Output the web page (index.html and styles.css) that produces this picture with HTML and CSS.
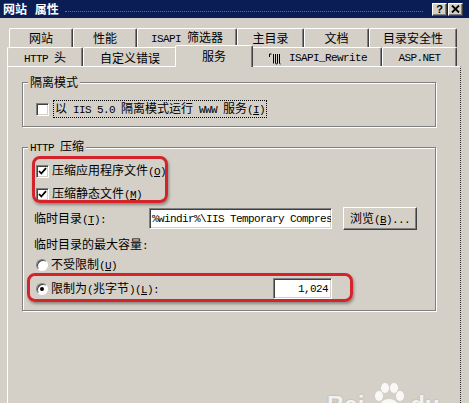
FILE: index.html
```html
<!DOCTYPE html>
<html lang="zh-CN">
<head>
<meta charset="utf-8">
<title>网站 属性</title>
<link rel="stylesheet" href="styles.css">
</head>
<body>
<div class="titlebar">
  <span class="title">网站 属性</span>
  <span class="title-dots"></span>
  <span class="tbtn help">?</span>
  <span class="tbtn close"><svg width="9" height="8" viewBox="0 0 9 8"><path d="M1 0.5 L8 7.5 M8 0.5 L1 7.5" stroke="#000" stroke-width="1.8"/></svg></span>
</div>

<div class="tabs">
  <div class="tabrow row1">
    <div class="tab t-site"><span>网站</span></div>
    <div class="tab t-perf"><span>性能</span></div>
    <div class="tab t-isapi"><span><span class="l">ISAPI </span>筛选器</span></div>
    <div class="tab t-home"><span>主目录</span></div>
    <div class="tab t-doc"><span>文档</span></div>
    <div class="tab t-sec"><span>目录安全性</span></div>
  </div>
  <div class="tabrow row2">
    <div class="tab t-http"><span><span class="l">HTTP </span>头</span></div>
    <div class="tab t-err"><span>自定义错误</span></div>
    <div class="tab t-svc sel"><span>服务</span></div>
    <div class="tab t-rw"><svg class="rw-icon" width="14" height="13" viewBox="0 0 14 13"><path d="M1.5 5 V2 H3.5 M5.5 2 V11.5 M7.5 2 V11 Q7.5 12 8.5 12 Q9.5 12 9.5 11 V2 M11.5 2 V11 Q11.5 12 12.5 12" stroke="#000" stroke-width="1" fill="none"/></svg><span class="l">ISAPI_Rewrite</span></div>
    <div class="tab t-asp"><span class="l">ASP.NET</span></div>
  </div>
</div>

<div class="panel">
  <fieldset class="group g1">
    <legend>隔离模式</legend>
    <div class="gbody g1-body">
      <div class="row">
        <span class="check"></span>
        <span class="label focus">以<span class="l"> IIS 5.0 </span>隔离模式运行<span class="l"> WWW </span>服务<span class="l">(<u>I</u>)</span></span>
      </div>
    </div>
  </fieldset>

  <fieldset class="group g2">
    <legend><span class="l">HTTP </span>压缩</legend>
    <div class="gbody g2-body">
      <div class="row r-cb1">
        <span class="check on"><svg width="9" height="9" viewBox="0 0 9 9"><path d="M1 4 L3.3 6.5 L8 1.2" stroke="#000" stroke-width="1.8" fill="none"/></svg></span>
        <span class="label">压缩应用程序文件<span class="l">(<u>O</u>)</span></span>
      </div>
      <div class="row r-cb2">
        <span class="check on"><svg width="9" height="9" viewBox="0 0 9 9"><path d="M1 4 L3.3 6.5 L8 1.2" stroke="#000" stroke-width="1.8" fill="none"/></svg></span>
        <span class="label">压缩静态文件<span class="l">(<u>M</u>)</span></span>
      </div>
      <div class="row r-dir">
        <span class="dir-label">临时目录<span class="l">(<u>T</u>):</span></span>
        <span class="input dir-input"><span class="l">%windir%\IIS Temporary Compressed Files</span></span>
        <span class="button browse"><span>浏览<span class="l">(<u>B</u>)...</span></span></span>
      </div>
      <div class="row r-cap">
        <span>临时目录的最大容量<span class="l">:</span></span>
      </div>
      <div class="row r-rad1">
        <span class="radio"></span>
        <span class="label">不受限制<span class="l">(<u>U</u>)</span></span>
      </div>
      <div class="row r-rad2">
        <span class="radio on"></span>
        <span class="label lim-label">限制为<span class="l">(</span>兆字节<span class="l">)(<u>L</u>):</span></span>
        <span class="input size-input"><span class="l">1,024</span></span>
      </div>
    </div>
  </fieldset>
</div>

<div class="mark mark1"></div>
<div class="mark mark2"></div>

<div class="wm">
  <span>Bai</span>
  <svg class="paw" width="36" height="30" viewBox="0 0 36 30"><ellipse cx="9" cy="14" rx="4" ry="5"/><ellipse cx="15" cy="6" rx="4" ry="5"/><ellipse cx="24" cy="6" rx="4" ry="5"/><ellipse cx="30" cy="14" rx="4" ry="5"/><ellipse cx="19" cy="24" rx="9" ry="7"/></svg>
  <span>du</span>
</div>
</body>
</html>
```

FILE: styles.css
```css
* { box-sizing: border-box; }
html, body { margin: 0; padding: 0; }
body {
  width: 469px;
  height: 403px;
  overflow: hidden;
  position: relative;
  background: #d4d0c8;
  font-family: "Noto Sans CJK SC", "Liberation Sans", sans-serif;
  font-size: 12px;
  line-height: 14px;
  color: #000;
}
.l { font-family: "Liberation Mono", monospace; font-size: 11px; letter-spacing: -0.6px; }
u { text-decoration: underline; text-underline-offset: 1px; }

/* title bar */
.titlebar {
  height: 18px;
  background: #0b1d55;
  display: flex;
  align-items: center;
  padding: 0 6px 0 3px;
  color: #fff;
}
.title { font-weight: bold; font-size: 12px; line-height: 14px; word-spacing: 5px; }
.title-dots {
  flex: 1;
  margin: 5px 8px 0 6px;
  border-top: 1px dotted rgba(160, 180, 225, 0.55);
  height: 0;
}
.tbtn {
  width: 15px;
  height: 13px;
  margin-left: 1px;
  background: #d4d0c8;
  border: 1px solid;
  border-color: #fff #404040 #404040 #fff;
  box-shadow: inset -1px -1px 0 #808080;
  display: flex;
  align-items: center;
  justify-content: center;
  color: #000;
  font: bold 11px/11px "Liberation Sans", sans-serif;
}

/* tabs */
.tabs { height: 48px; padding-top: 10px; }
.tabrow { display: flex; height: 19px; }
.row1 { margin-left: 9px; }
.row2 { margin-left: 7px; align-items: flex-end; }
.tab {
  flex: none;
  height: 19px;
  background: #d4d0c8;
  border-top: 1px solid #fff;
  border-left: 1px solid #fff;
  border-right: 1px solid #404040;
  box-shadow: inset -1px 0 0 #808080;
  border-radius: 2px 2px 0 0;
  display: flex;
  align-items: center;
  justify-content: center;
  white-space: nowrap;
}
.row2 .tab { padding-top: 2px; }
.t-site { width: 64px; }
.t-perf { width: 64px; }
.t-isapi { width: 100px; }
.t-home { width: 67px; }
.t-doc { width: 65px; }
.t-sec { width: 88px; }
.t-http { width: 76px; }
.t-err { width: 94px; }
.row2 .t-svc {
  width: 78px;
  height: 22px;
  margin: 0 -2px -1px;
  padding: 0 0 2px;
  position: relative;
  z-index: 1;
}
.t-rw { width: 131px; }
.rw-icon { margin-right: 7px; margin-left: 2px; }
.t-asp { width: 75px; }

/* panel */
.panel {
  margin-left: 7px;
  width: 454px;
  height: 337px;
  border-top: 1px solid #fff;
  border-left: 1px solid #fff;
  border-right: 1px dotted #2a2a2a;
  padding: 8px 0 0 14px;
}
.group {
  margin: 0;
  padding: 0;
  min-width: 0;
  width: 414px;
  border: 1px solid #808080;
  box-shadow: 1px 1px 0 #fff, inset 1px 1px 0 #fff;
}
.group legend {
  margin-left: 5px;
  padding: 0 2px;
  line-height: 14px;
  background: #d4d0c8;
}
.g2 { margin-top: 12px; }
.g1-body { padding: 12px 0 9px 13px; }
.g2-body { padding: 0 0 11px 11px; }

.row { display: flex; align-items: center; height: 16px; white-space: nowrap; }
.label { margin-left: 3px; }
.focus { outline: 1px dotted #000; outline-offset: 0; margin-left: 5px; padding: 0 1px; }

.check {
  width: 13px;
  height: 13px;
  flex: none;
  background: #fff;
  border: 1px solid;
  border-color: #808080 #fff #fff #808080;
  box-shadow: inset 1px 1px 0 #404040, inset -1px -1px 0 #d4d0c8;
  display: flex;
  align-items: center;
  justify-content: center;
}
.g2-body .check, .g2-body .radio { margin-left: 2px; }

.radio {
  width: 12px;
  height: 12px;
  flex: none;
  border-radius: 50%;
  background: #fff;
  border: 1px solid;
  border-color: #808080 #fff #fff #808080;
  box-shadow: inset 1px 1px 0 #404040;
  display: flex;
  align-items: center;
  justify-content: center;
}
.radio.on::after {
  content: "";
  width: 4px;
  height: 4px;
  border-radius: 50%;
  background: #000;
}

.r-cb1 { margin-top: 8px; }
.r-cb2 { margin-top: 7px; }
.r-dir { margin-top: 5px; height: 23px; }
.dir-label { width: 115px; flex: none; }
.input {
  height: 21px;
  background: #fff;
  border: 1px solid;
  border-color: #808080 #fff #fff #808080;
  box-shadow: inset 1px 1px 0 #404040, inset -1px -1px 0 #d4d0c8;
  display: flex;
  align-items: center;
  overflow: hidden;
  white-space: nowrap;
}
.dir-input { width: 183px; padding-left: 2px; }
.button {
  height: 23px;
  background: #d4d0c8;
  border: 1px solid;
  border-color: #fff #404040 #404040 #fff;
  box-shadow: inset -1px -1px 0 #808080;
  display: flex;
  align-items: center;
  justify-content: center;
}
.browse { width: 74px; margin-left: 11px; }
.r-cap { margin-top: 7px; }
.r-rad1 { margin-top: 4px; }
.r-rad2 { margin-top: 5px; height: 21px; }
.lim-label { width: 222px; flex: none; }
.size-input { width: 59px; justify-content: flex-end; padding-right: 3px; }

/* red annotation overlays */
.mark {
  position: absolute;
  border: 3px solid #d5232c;
  border-radius: 8px;
  box-shadow: 1px 2px 3px rgba(0, 0, 0, 0.35);
}
.mark1 { left: 32px; top: 156px; width: 136px; height: 47px; }
.mark2 { left: 27px; top: 273px; width: 326px; height: 29px; }

/* watermark */
.wm {
  position: absolute;
  left: 327px;
  top: 393px;
  display: flex;
  align-items: flex-start;
  color: rgba(255, 255, 255, 0.85);
  font: bold 24px/24px "Liberation Sans", sans-serif;
  text-shadow: 0 0 2px rgba(0, 0, 0, 0.2);
}
.paw { margin: -11px 4px 0 6px; fill: rgba(255, 255, 255, 0.85); }
```
